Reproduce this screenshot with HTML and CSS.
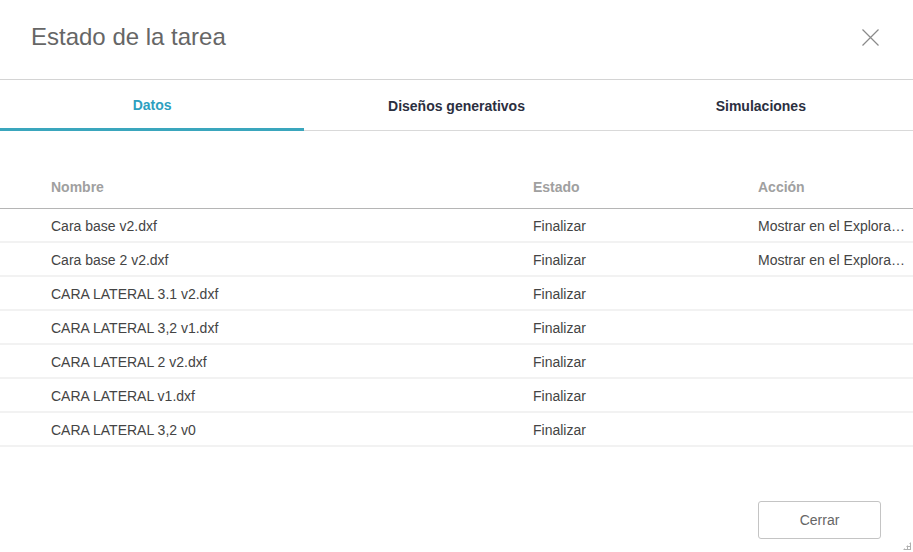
FILE: index.html
```html
<!DOCTYPE html>
<html lang="es">
<head>
    <meta charset="UTF-8">
    <title>Estado de la tarea</title>
    <link rel="stylesheet" href="styles.css">
</head>
<body>
    <div class="dialog">
        <header class="dialog-head">
            <h1 class="title">Estado de la tarea</h1>
            <button class="close" aria-label="Cerrar">
                <svg width="17" height="17" viewBox="0 0 17 17">
                    <path d="M0.5 0.5 L16.5 16.5 M16.5 0.5 L0.5 16.5" stroke="#8a8a8a" stroke-width="1.2" fill="none"/>
                </svg>
            </button>
        </header>

        <nav class="tabs">
            <a class="tab active" href="#">Datos</a>
            <a class="tab" href="#">Diseños generativos</a>
            <a class="tab" href="#">Simulaciones</a>
        </nav>

        <div class="table">
            <div class="row head">
                <span class="c-name">Nombre</span>
                <span class="c-state">Estado</span>
                <span class="c-action">Acción</span>
            </div>
            <div class="row">
                <span class="c-name">Cara base v2.dxf</span>
                <span class="c-state">Finalizar</span>
                <span class="c-action">Mostrar en el Explorador</span>
            </div>
            <div class="row">
                <span class="c-name">Cara base 2 v2.dxf</span>
                <span class="c-state">Finalizar</span>
                <span class="c-action">Mostrar en el Explorador</span>
            </div>
            <div class="row">
                <span class="c-name">CARA LATERAL 3.1 v2.dxf</span>
                <span class="c-state">Finalizar</span>
                <span class="c-action"></span>
            </div>
            <div class="row">
                <span class="c-name">CARA LATERAL 3,2 v1.dxf</span>
                <span class="c-state">Finalizar</span>
                <span class="c-action"></span>
            </div>
            <div class="row">
                <span class="c-name">CARA LATERAL 2 v2.dxf</span>
                <span class="c-state">Finalizar</span>
                <span class="c-action"></span>
            </div>
            <div class="row">
                <span class="c-name">CARA LATERAL v1.dxf</span>
                <span class="c-state">Finalizar</span>
                <span class="c-action"></span>
            </div>
            <div class="row">
                <span class="c-name">CARA LATERAL 3,2 v0</span>
                <span class="c-state">Finalizar</span>
                <span class="c-action"></span>
            </div>
        </div>

        <footer class="dialog-foot">
            <button class="btn">Cerrar</button>
            <span class="grip"></span>
        </footer>
    </div>
</body>
</html>
```

FILE: styles.css
```css
body {
    margin: 0;
    padding: 0;
    background: #fff;
    font-family: "Liberation Sans", Arial, sans-serif;
    color: #444;
}

.dialog {
    width: 913px;
    height: 552px;
    display: flex;
    flex-direction: column;
    position: relative;
    overflow: hidden;
}

.dialog-head {
    height: 80px;
    border-bottom: 1px solid #d4d4d4;
    display: flex;
    align-items: center;
    justify-content: space-between;
    padding: 0 34px 0 31px;
    box-sizing: border-box;
}

.title {
    margin: 0 0 5px 0;
    font-size: 24px;
    font-weight: normal;
    color: #666;
}

.close {
    background: none;
    border: none;
    padding: 0;
    margin-bottom: 5px;
    cursor: pointer;
    display: flex;
}

.tabs {
    display: flex;
    height: 51px;
    border-bottom: 1px solid #d9d9d9;
    box-sizing: border-box;
}

.tab {
    flex: 1;
    display: flex;
    align-items: center;
    justify-content: center;
    padding-top: 4px;
    font-size: 14px;
    font-weight: bold;
    color: #2b2f3f;
    text-decoration: none;
    border-bottom: 3px solid transparent;
    margin-bottom: -1px;
}

.tab.active {
    color: #2d9fc0;
    border-bottom-color: #3aa6bd;
    padding-top: 1px;
}

.table {
    margin-top: 40px;
}

.row {
    display: flex;
    align-items: center;
    height: 34px;
    border-bottom: 2px solid #f2f2f2;
    box-sizing: border-box;
    font-size: 14px;
    padding-top: 2px;
}

.row.head {
    height: 38px;
    border-bottom: 1px solid #b5b5b5;
    color: #a0a0a0;
    font-weight: bold;
    padding: 0 0 5px 0;
}

.c-name {
    width: 482px;
    padding-left: 51px;
}

.c-state {
    width: 225px;
}

.c-action {
    flex: 1;
    white-space: nowrap;
    overflow: hidden;
    text-overflow: ellipsis;
    padding-right: 6px;
}

.dialog-foot {
    margin-top: auto;
    display: flex;
    justify-content: flex-end;
    padding: 0 32px 13px 0;
}

.btn {
    width: 123px;
    height: 38px;
    background: #fff;
    border: 1px solid #c4c4c4;
    border-radius: 3px;
    font-family: "Liberation Sans", Arial, sans-serif;
    font-size: 14px;
    color: #666;
    cursor: pointer;
}

.grip {
    position: absolute;
    right: 2px;
    bottom: 2px;
    width: 8px;
    height: 8px;
    background-image: radial-gradient(circle, #b0b0b0 1px, transparent 1.2px);
    background-size: 3px 3px;
    clip-path: polygon(100% 0, 100% 100%, 0 100%);
}
```
